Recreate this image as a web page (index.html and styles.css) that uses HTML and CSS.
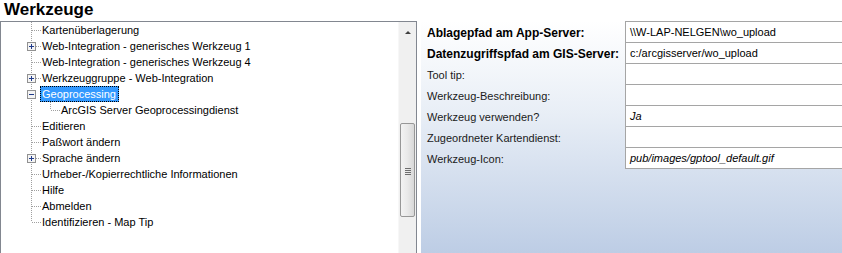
FILE: index.html
```
<!DOCTYPE html>
<html>
<head>
<meta charset="utf-8">
<link rel="stylesheet" href="styles.css">
</head>
<body>
<h1 class="title">Werkzeuge</h1>
<div class="main">
  <div class="tree-panel">
    <div class="tree">
      <div class="row"><svg class="gutter" width="41" height="16"><line class="dot" x1="30.5" y1="0" x2="30.5" y2="16"/><line class="dot" x1="31" y1="8.5" x2="40" y2="8.5"/></svg><span class="label">Kartenüberlagerung</span></div>
      <div class="row"><svg class="gutter" width="41" height="16"><line class="dot" x1="30.5" y1="0" x2="30.5" y2="16"/><line class="dot" x1="35" y1="8.5" x2="40" y2="8.5"/><rect class="box" x="26.5" y="4.5" width="8" height="8"/><line class="sign" x1="28" y1="8.5" x2="33" y2="8.5"/><line class="sign" x1="30.5" y1="6" x2="30.5" y2="11"/></svg><span class="label">Web-Integration - generisches Werkzeug 1</span></div>
      <div class="row"><svg class="gutter" width="41" height="16"><line class="dot" x1="30.5" y1="0" x2="30.5" y2="16"/><line class="dot" x1="31" y1="8.5" x2="40" y2="8.5"/></svg><span class="label">Web-Integration - generisches Werkzeug 4</span></div>
      <div class="row"><svg class="gutter" width="41" height="16"><line class="dot" x1="30.5" y1="0" x2="30.5" y2="16"/><line class="dot" x1="35" y1="8.5" x2="40" y2="8.5"/><rect class="box" x="26.5" y="4.5" width="8" height="8"/><line class="sign" x1="28" y1="8.5" x2="33" y2="8.5"/><line class="sign" x1="30.5" y1="6" x2="30.5" y2="11"/></svg><span class="label">Werkzeuggruppe - Web-Integration</span></div>
      <div class="row"><svg class="gutter" width="41" height="16"><line class="dot" x1="30.5" y1="0" x2="30.5" y2="16"/><rect class="box" x="26.5" y="4.5" width="8" height="8"/><line class="sign" x1="28" y1="8.5" x2="33" y2="8.5"/></svg><span class="label selected">Geoprocessing</span></div>
      <div class="row"><svg class="gutter" width="60" height="16"><line class="dot" x1="30.5" y1="0" x2="30.5" y2="16"/><line class="dot" x1="49.5" y1="0" x2="49.5" y2="8"/><line class="dot" x1="50" y1="8.5" x2="59" y2="8.5"/></svg><span class="label">ArcGIS Server Geoprocessingdienst</span></div>
      <div class="row"><svg class="gutter" width="41" height="16"><line class="dot" x1="30.5" y1="0" x2="30.5" y2="16"/><line class="dot" x1="31" y1="8.5" x2="40" y2="8.5"/></svg><span class="label">Editieren</span></div>
      <div class="row"><svg class="gutter" width="41" height="16"><line class="dot" x1="30.5" y1="0" x2="30.5" y2="16"/><line class="dot" x1="31" y1="8.5" x2="40" y2="8.5"/></svg><span class="label">Paßwort ändern</span></div>
      <div class="row"><svg class="gutter" width="41" height="16"><line class="dot" x1="30.5" y1="0" x2="30.5" y2="16"/><line class="dot" x1="35" y1="8.5" x2="40" y2="8.5"/><rect class="box" x="26.5" y="4.5" width="8" height="8"/><line class="sign" x1="28" y1="8.5" x2="33" y2="8.5"/><line class="sign" x1="30.5" y1="6" x2="30.5" y2="11"/></svg><span class="label">Sprache ändern</span></div>
      <div class="row"><svg class="gutter" width="41" height="16"><line class="dot" x1="30.5" y1="0" x2="30.5" y2="16"/><line class="dot" x1="31" y1="8.5" x2="40" y2="8.5"/></svg><span class="label">Urheber-/Kopierrechtliche Informationen</span></div>
      <div class="row"><svg class="gutter" width="41" height="16"><line class="dot" x1="30.5" y1="0" x2="30.5" y2="16"/><line class="dot" x1="31" y1="8.5" x2="40" y2="8.5"/></svg><span class="label">Hilfe</span></div>
      <div class="row"><svg class="gutter" width="41" height="16"><line class="dot" x1="30.5" y1="0" x2="30.5" y2="16"/><line class="dot" x1="31" y1="8.5" x2="40" y2="8.5"/></svg><span class="label">Abmelden</span></div>
      <div class="row"><svg class="gutter" width="41" height="16"><line class="dot" x1="30.5" y1="0" x2="30.5" y2="8"/><line class="dot" x1="31" y1="8.5" x2="40" y2="8.5"/></svg><span class="label">Identifizieren - Map Tip</span></div>
    </div>
    <div class="scrollbar">
      <div class="arrow"><svg width="16" height="16"><path d="M5 11 L8 8 L11 11 Z" fill="#404040"/></svg></div>
      <div class="track-top"></div>
      <div class="thumb"><svg width="8" height="9"><path d="M1 2.5 H7 M1 4.5 H7 M1 6.5 H7 M1 8.5 H7" stroke="#6e6e6e" stroke-width="1"/></svg></div>
    </div>
  </div>
  <div class="props">
    <div class="grid">
      <div class="plabel bold">Ablagepfad am App-Server:</div><div class="field first">\\W-LAP-NELGEN\wo_upload</div>
      <div class="plabel bold">Datenzugriffspfad am GIS-Server:</div><div class="field">c:/arcgisserver/wo_upload</div>
      <div class="plabel">Tool tip:</div><div class="field"></div>
      <div class="plabel">Werkzeug-Beschreibung:</div><div class="field"></div>
      <div class="plabel">Werkzeug verwenden?</div><div class="field italic">Ja</div>
      <div class="plabel">Zugeordneter Kartendienst:</div><div class="field"></div>
      <div class="plabel">Werkzeug-Icon:</div><div class="field italic last">pub/images/gptool_default.gif</div>
    </div>
  </div>
</div>
</body>
</html>
```
FILE: styles.css
```
html, body {
  margin: 0;
  padding: 0;
  background: #ffffff;
  font-family: "Liberation Sans", Arial, sans-serif;
  font-size: 11px;
  color: #000;
  overflow: hidden;
  height: 253px;
}
.title {
  margin: 0;
  padding: 0 0 0 4px;
  height: 21px;
  font-size: 17px;
  line-height: 20px;
  font-weight: bold;
  color: #000;
}
.main {
  display: flex;
  height: 232px;
}
.tree-panel {
  width: 415px;
  border: 1px solid #828790;
  border-bottom: none;
  display: flex;
  background: #fff;
}
.tree {
  flex: 1;
}
.row {
  display: flex;
  align-items: center;
  height: 16px;
}
.gutter {
  flex: none;
  display: block;
}
.dot {
  stroke: #a0a0a0;
  stroke-width: 1;
  stroke-dasharray: 1 1;
}
.box {
  fill: #f4f4f4;
  stroke: #919191;
  stroke-width: 1;
}
.sign {
  stroke: #1f3a8a;
  stroke-width: 1;
}
.label {
  white-space: nowrap;
  line-height: 16px;
  font-size: 11px;
}
.selected {
  background: #3399ff;
  color: #fff;
  outline: 1px dotted #000;
  outline-offset: -1px;
  padding: 0 3px 0 2px;
  margin-left: -2px;
}
.scrollbar {
  width: 17px;
  background: #f0f0f0;
  border-left: 1px solid #f7f7f7;
  display: flex;
  flex-direction: column;
  align-items: center;
}
.arrow {
  height: 17px;
  display: flex;
  align-items: center;
  justify-content: center;
}
.track-top {
  height: 84px;
}
.thumb {
  width: 13px;
  height: 92px;
  border: 1px solid #979797;
  border-radius: 2px;
  background: linear-gradient(to right, #f3f3f3 0%, #e9e9e9 50%, #d8d8d8 100%);
  display: flex;
  align-items: center;
  justify-content: center;
}
.thumb svg {
  display: block;
}
.props {
  flex: 1;
  margin-left: 4px;
  background: linear-gradient(to bottom, #ffffff 0%, #e8eef6 40%, #bdcde5 100%);
  padding-left: 6px;
}
.grid {
  display: grid;
  grid-template-columns: 198px 1fr;
}
.plabel {
  height: 21px;
  line-height: 21px;
  padding-top: 2px;
  box-sizing: border-box;
  white-space: nowrap;
  color: #1a1a1a;
  font-size: 11px;
}
.bold {
  font-weight: bold;
  font-size: 12px;
  color: #000;
}
.field {
  height: 21px;
  box-sizing: border-box;
  border: 1px solid #a5a5a5;
  border-bottom: none;
  border-right: none;
  background: #fff;
  padding-left: 4px;
  line-height: 20px;
  white-space: nowrap;
  font-size: 11px;
}
.field.last {
  height: 22px;
  border-bottom: 1px solid #a5a5a5;
}
.italic {
  font-style: italic;
}
```
